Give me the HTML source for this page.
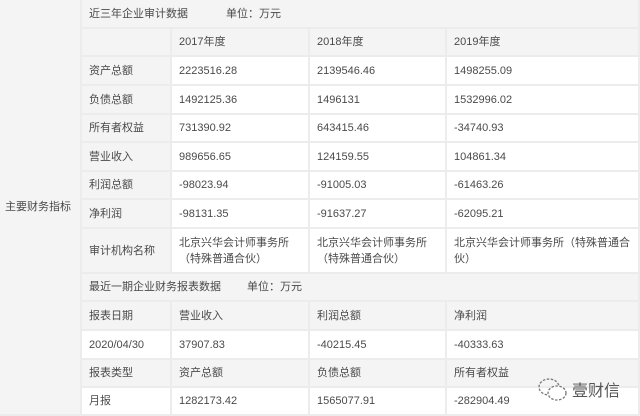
<!DOCTYPE html>
<html><head><meta charset="utf-8"><style>
body{margin:0;width:640px;height:416px;overflow:hidden;background:#fff;font-family:"Liberation Sans","Noto Sans CJK SC",sans-serif;font-size:11px;color:#4a4a4a}
.c{position:absolute;box-sizing:border-box;padding-left:7px;display:flex;align-items:center;border-right:2px solid #ececec;border-bottom:2px solid #ececec;line-height:16px}
.g{background:#f4f4f4}.w{background:#fff}
</style></head><body>
<div class="c g" style="left:0;top:0;width:82px;height:416px;padding-left:5px">主要财务指标</div>
<div class="c g" style="left:82px;top:0;width:558px;height:29px">近三年企业审计数据<span style="margin-left:38px">单位：万元</span></div>
<div class="c g" style="left:82px;top:29px;width:90px;height:28px"></div>
<div class="c g" style="left:172px;top:29px;width:138px;height:28px">2017年度</div>
<div class="c g" style="left:310px;top:29px;width:137px;height:28px">2018年度</div>
<div class="c g" style="left:447px;top:29px;width:193px;height:28px">2019年度</div>

<div class="c g" style="left:82px;top:57px;width:90px;height:29px">资产总额</div>
<div class="c w" style="left:172px;top:57px;width:138px;height:29px">2223516.28</div>
<div class="c w" style="left:310px;top:57px;width:137px;height:29px">2139546.46</div>
<div class="c w" style="left:447px;top:57px;width:193px;height:29px">1498255.09</div>

<div class="c g" style="left:82px;top:86px;width:90px;height:29px">负债总额</div>
<div class="c w" style="left:172px;top:86px;width:138px;height:29px">1492125.36</div>
<div class="c w" style="left:310px;top:86px;width:137px;height:29px">1496131</div>
<div class="c w" style="left:447px;top:86px;width:193px;height:29px">1532996.02</div>

<div class="c g" style="left:82px;top:115px;width:90px;height:28px">所有者权益</div>
<div class="c w" style="left:172px;top:115px;width:138px;height:28px">731390.92</div>
<div class="c w" style="left:310px;top:115px;width:137px;height:28px">643415.46</div>
<div class="c w" style="left:447px;top:115px;width:193px;height:28px">-34740.93</div>

<div class="c g" style="left:82px;top:143px;width:90px;height:29px">营业收入</div>
<div class="c w" style="left:172px;top:143px;width:138px;height:29px">989656.65</div>
<div class="c w" style="left:310px;top:143px;width:137px;height:29px">124159.55</div>
<div class="c w" style="left:447px;top:143px;width:193px;height:29px">104861.34</div>

<div class="c g" style="left:82px;top:172px;width:90px;height:28px">利润总额</div>
<div class="c w" style="left:172px;top:172px;width:138px;height:28px">-98023.94</div>
<div class="c w" style="left:310px;top:172px;width:137px;height:28px">-91005.03</div>
<div class="c w" style="left:447px;top:172px;width:193px;height:28px">-61463.26</div>

<div class="c g" style="left:82px;top:200px;width:90px;height:29px">净利润</div>
<div class="c w" style="left:172px;top:200px;width:138px;height:29px">-98131.35</div>
<div class="c w" style="left:310px;top:200px;width:137px;height:29px">-91637.27</div>
<div class="c w" style="left:447px;top:200px;width:193px;height:29px">-62095.21</div>

<div class="c g" style="left:82px;top:229px;width:90px;height:45px">审计机构名称</div>
<div class="c w" style="left:172px;top:229px;width:138px;height:45px">北京兴华会计师事务所（特殊普通合伙）</div>
<div class="c w" style="left:310px;top:229px;width:137px;height:45px">北京兴华会计师事务所（特殊普通合伙）</div>
<div class="c w" style="left:447px;top:229px;width:193px;height:45px">北京兴华会计师事务所（特殊普通合伙）</div>

<div class="c g" style="left:82px;top:274px;width:558px;height:28px">最近一期企业财务报表数据<span style="margin-left:26px">单位：万元</span></div>

<div class="c g" style="left:82px;top:302px;width:90px;height:29px">报表日期</div>
<div class="c g" style="left:172px;top:302px;width:138px;height:29px">营业收入</div>
<div class="c g" style="left:310px;top:302px;width:137px;height:29px">利润总额</div>
<div class="c g" style="left:447px;top:302px;width:193px;height:29px">净利润</div>

<div class="c w" style="left:82px;top:331px;width:90px;height:29px">2020/04/30</div>
<div class="c w" style="left:172px;top:331px;width:138px;height:29px">37907.83</div>
<div class="c w" style="left:310px;top:331px;width:137px;height:29px">-40215.45</div>
<div class="c w" style="left:447px;top:331px;width:193px;height:29px">-40333.63</div>

<div class="c g" style="left:82px;top:360px;width:90px;height:28px">报表类型</div>
<div class="c g" style="left:172px;top:360px;width:138px;height:28px">资产总额</div>
<div class="c g" style="left:310px;top:360px;width:137px;height:28px">负债总额</div>
<div class="c g" style="left:447px;top:360px;width:193px;height:28px">所有者权益</div>

<div class="c w" style="left:82px;top:388px;width:90px;height:28px">月报</div>
<div class="c w" style="left:172px;top:388px;width:138px;height:28px">1282173.42</div>
<div class="c w" style="left:310px;top:388px;width:137px;height:28px">1565077.91</div>
<div class="c w" style="left:447px;top:388px;width:193px;height:28px">-282904.49</div>

<svg style="position:absolute;left:537px;top:377px" width="32" height="26" viewBox="0 0 32 26" fill="none" stroke="#777" stroke-width="1.3" stroke-dasharray="2.5 1.5">
<ellipse cx="12" cy="10" rx="10" ry="8"/><ellipse cx="20" cy="16" rx="9" ry="7" fill="#fff"/></svg>
<div style="position:absolute;left:572px;top:377px;font-size:16px;color:#555">壹财信</div>
</body></html>
